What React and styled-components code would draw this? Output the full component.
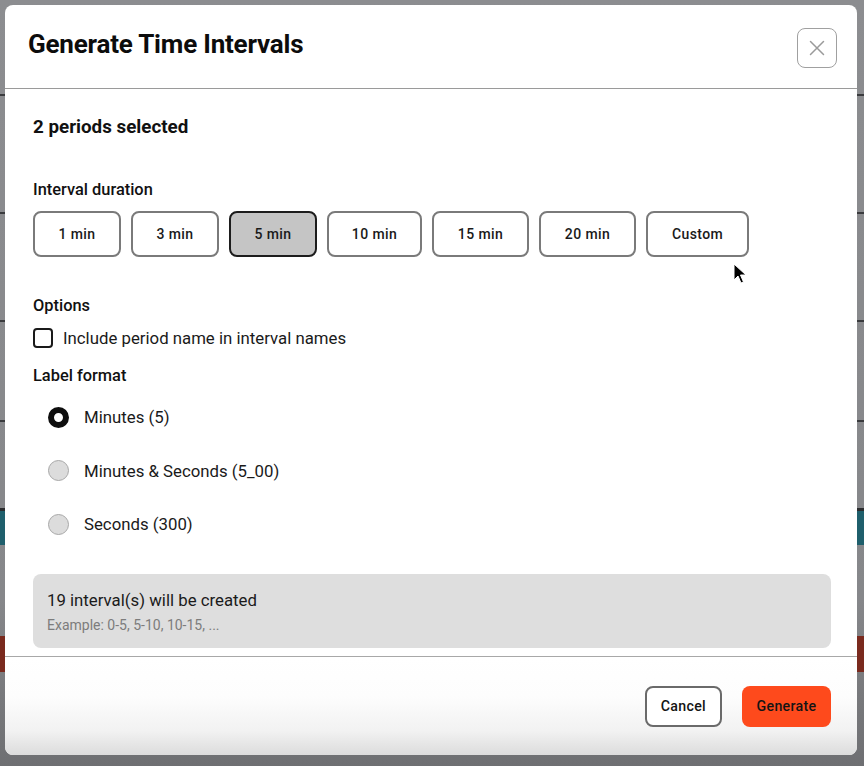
import React, { useState } from "react";
import styled, { createGlobalStyle } from "styled-components";

const GlobalStyle = createGlobalStyle`
  html, body {
    margin: 0;
    padding: 0;
    height: 100%;
  }
  body {
    font-family: Roboto, "Noto Sans", "Liberation Sans", sans-serif;
    color: #111;
  }
`;

const Backdrop = styled.div`
  position: relative;
  width: 864px;
  height: 766px;
  overflow: hidden;
  background:
    linear-gradient(to bottom,
      transparent 0, transparent 94px, #3a3b3e 94px, #3a3b3e 96px,
      transparent 96px, transparent 212px, #3a3b3e 212px, #3a3b3e 214px,
      transparent 214px, transparent 320px, #3a3b3e 320px, #3a3b3e 322px,
      transparent 322px, transparent 420px, #3a3b3e 420px, #3a3b3e 422px,
      transparent 422px, transparent 508px, #2b2c2e 508px, #2b2c2e 511px,
      #1f5f6c 511px, #1f5f6c 545px, transparent 545px, transparent 636px,
      #7a2a1e 636px, #7a2a1e 672px, transparent 672px),
    linear-gradient(to bottom, #8c8d90 0, #86878a 600px, #6e6f72 766px);
`;

const Modal = styled.div`
  position: absolute;
  left: 5px;
  top: 5px;
  width: 852px;
  height: 750px;
  background: #fff;
  border-radius: 8px;
  display: flex;
  flex-direction: column;
  overflow: hidden;
`;

const Header = styled.div`
  height: 84px;
  box-sizing: border-box;
  display: flex;
  align-items: center;
  justify-content: space-between;
  padding: 0 20px 0 23px;
  border-bottom: 1px solid #9a9a9a;
`;

const Title = styled.h2`
  margin: 0 0 6px;
  font-size: 26px;
  line-height: 30px;
  font-weight: 700;
  letter-spacing: -0.2px;
  color: #0c0c0c;
`;

const CloseButton = styled.button`
  width: 40px;
  height: 40px;
  margin-top: 2px;
  border: 1px solid #a0a0a0;
  border-radius: 8px;
  background: #fff;
  display: flex;
  align-items: center;
  justify-content: center;
  padding: 0;
  color: #9a9a9a;
`;

const Body = styled.div`
  flex: 1;
  padding: 27px 26px 0 28px;
  border-bottom: 1px solid #a8a8a8;
`;

const Selected = styled.div`
  font-size: 18.8px;
  font-weight: 700;
  line-height: 22px;
  color: #111;
`;

const SectionLabel = styled.div`
  font-size: 16.4px;
  font-weight: 500;
  line-height: 20px;
  color: #111;
  margin-top: ${(p) => p.$top}px;
`;

const DurationRow = styled.div`
  display: flex;
  gap: 10px;
  margin-top: 11px;
`;

const DurationButton = styled.button`
  height: 46px;
  min-width: ${(p) => p.$width}px;
  box-sizing: border-box;
  border: 2px solid ${(p) => (p.$active ? "#1d1d1d" : "#7a7a7a")};
  background: ${(p) => (p.$active ? "#c5c5c5" : "#fff")};
  border-radius: 8px;
  font-family: inherit;
  font-size: 14px;
  font-weight: 500;
  letter-spacing: 0.4px;
  color: #1a1a1a;
  padding: 0;
`;

const CheckRow = styled.label`
  display: flex;
  align-items: center;
  gap: 10px;
  margin-top: 12px;
  font-size: 16.8px;
  line-height: 20px;
  color: #1a1a1a;
`;

const Box = styled.span`
  width: 20px;
  height: 20px;
  flex-shrink: 0;
  box-sizing: border-box;
  border: 2px solid #1a1a1a;
  border-radius: 4px;
  background: #fff;
`;

const RadioList = styled.div`
  display: flex;
  flex-direction: column;
  gap: 33.5px;
  margin-top: 21px;
  padding-left: 15px;
`;

const RadioRow = styled.label`
  display: flex;
  align-items: center;
  gap: 15px;
  font-size: 16.8px;
  color: #1a1a1a;
  height: 20px;
`;

const RadioDot = styled.span`
  width: 21px;
  height: 21px;
  flex-shrink: 0;
  box-sizing: border-box;
  border-radius: 50%;
  border: ${(p) => (p.$checked ? "6.5px solid #0e0e0e" : "1px solid #a8a8a8")};
  background: ${(p) => (p.$checked ? "#fff" : "#dcdcdc")};
`;

const Summary = styled.div`
  margin-top: 40px;
  height: 74px;
  box-sizing: border-box;
  background: #dedede;
  border-radius: 8px;
  padding: 16px 14px 0;
`;

const SummaryMain = styled.div`
  font-size: 16.8px;
  line-height: 20px;
  color: #1a1a1a;
`;

const SummaryNote = styled.div`
  margin-top: 7px;
  font-size: 14px;
  line-height: 16px;
  color: #7c7c7c;
`;

const Footer = styled.div`
  height: 98px;
  flex-shrink: 0;
  box-sizing: border-box;
  display: flex;
  align-items: center;
  justify-content: flex-end;
  gap: 20px;
  padding: 0 26px 0 0;
  background: linear-gradient(to bottom, #ffffff 0%, #fdfdfd 40%, #f2f2f2 75%, #dcdcdc 100%);
`;

const FooterButton = styled.button`
  height: 41px;
  box-sizing: border-box;
  padding: 0 14px;
  border-radius: 8px;
  border: ${(p) => (p.$primary ? "none" : "2px solid #6a6a6a")};
  background: ${(p) => (p.$primary ? "#fe4a1c" : "#fff")};
  font-family: inherit;
  font-size: 14.2px;
  font-weight: 500;
  letter-spacing: 0.3px;
  color: #141414;
  min-width: ${(p) => p.$width}px;
`;

const Cursor = styled.svg`
  position: absolute;
  left: 733px;
  top: 263px;
`;

const durations = [
  { label: "1 min", w: 88 },
  { label: "3 min", w: 88 },
  { label: "5 min", w: 88 },
  { label: "10 min", w: 95 },
  { label: "15 min", w: 97 },
  { label: "20 min", w: 97 },
  { label: "Custom", w: 103 },
];

const formats = ["Minutes (5)", "Minutes & Seconds (5_00)", "Seconds (300)"];

export default function App() {
  const [duration, setDuration] = useState("5 min");
  const [format, setFormat] = useState(formats[0]);

  return (
    <Backdrop>
      <GlobalStyle />
      <Modal>
        <Header>
          <Title>Generate Time Intervals</Title>
          <CloseButton aria-label="Close">
            <svg width="16" height="16" viewBox="0 0 16 16" fill="none">
              <path d="M1.5 1.5L14.5 14.5M14.5 1.5L1.5 14.5" stroke="currentColor" strokeWidth="1.5" strokeLinecap="round" />
            </svg>
          </CloseButton>
        </Header>
        <Body>
          <Selected>2 periods selected</Selected>
          <SectionLabel $top={42}>Interval duration</SectionLabel>
          <DurationRow>
            {durations.map((d) => (
              <DurationButton
                key={d.label}
                $width={d.w}
                $active={duration === d.label}
                onClick={() => setDuration(d.label)}
              >
                {d.label}
              </DurationButton>
            ))}
          </DurationRow>
          <SectionLabel $top={39}>Options</SectionLabel>
          <CheckRow>
            <Box />
            Include period name in interval names
          </CheckRow>
          <SectionLabel $top={18}>Label format</SectionLabel>
          <RadioList>
            {formats.map((f) => (
              <RadioRow key={f} onClick={() => setFormat(f)}>
                <RadioDot $checked={format === f} />
                {f}
              </RadioRow>
            ))}
          </RadioList>
          <Summary>
            <SummaryMain>19 interval(s) will be created</SummaryMain>
            <SummaryNote>Example: 0-5, 5-10, 10-15, ...</SummaryNote>
          </Summary>
        </Body>
        <Footer>
          <FooterButton $width={77}>Cancel</FooterButton>
          <FooterButton $primary $width={89}>Generate</FooterButton>
        </Footer>
      </Modal>
      <Cursor width="14" height="22" viewBox="0 0 14 22">
        <path d="M1 1L1 17L5 13L8 20L10.5 19L7.5 12L13 12Z" fill="#000" stroke="#fff" strokeWidth="1" strokeLinejoin="round" />
      </Cursor>
    </Backdrop>
  );
}
